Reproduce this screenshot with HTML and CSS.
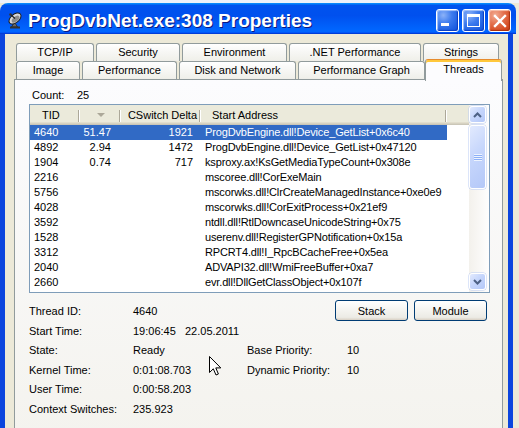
FILE: index.html
```html
<!DOCTYPE html>
<html>
<head>
<meta charset="utf-8">
<link rel="stylesheet" href="styles.css">
</head>
<body>
<div class="window">
  <div class="titlebar">
    <svg class="appicon" viewBox="0 0 18 18" width="18" height="18">
      <path d="M7.5 11 L10.5 16 L4.5 16 Z" fill="#6a6a6a" stroke="#222" stroke-width="0.8"/>
      <rect x="3" y="15.5" width="10" height="2" fill="#333"/>
      <ellipse cx="8" cy="7.5" rx="7" ry="4.2" transform="rotate(-40 8 7.5)" fill="#d9d9d9" stroke="#1d1d1d" stroke-width="1"/>
      <ellipse cx="8.6" cy="8.2" rx="4.6" ry="2.4" transform="rotate(-40 8.6 8.2)" fill="#8c8c8c"/>
      <line x1="8" y1="7.5" x2="3.5" y2="3.5" stroke="#1d1d1d" stroke-width="1.2"/>
      <circle cx="3.5" cy="3.5" r="1.3" fill="#333"/>
    </svg>
    <span class="title">ProgDvbNet.exe:308 Properties</span>
    <div class="tb-buttons">
      <div class="tbtn blue min"><span class="min-glyph"></span></div>
      <div class="tbtn blue max"><span class="max-glyph"></span></div>
      <div class="tbtn close">
        <svg viewBox="0 0 14 14" width="14" height="14"><path d="M2 2 L12 12 M12 2 L2 12" stroke="#fff" stroke-width="2.4" stroke-linecap="square"/></svg>
      </div>
    </div>
  </div>
  <div class="frame">
    <div class="tabs">
      <div class="tabrow">
        <div class="tab t-tcp">TCP/IP</div>
        <div class="tab t-sec">Security</div>
        <div class="tab t-env">Environment</div>
        <div class="tab t-net">.NET Performance</div>
        <div class="tab t-str">Strings</div>
      </div>
      <div class="tabrow">
        <div class="tab t-img">Image</div>
        <div class="tab t-perf">Performance</div>
        <div class="tab t-disk">Disk and Network</div>
        <div class="tab t-graph">Performance Graph</div>
        <div class="tab t-thr active">Threads</div>
      </div>
    </div>
    <div class="panel">
      <div class="count"><span class="count-label">Count:</span><span>25</span></div>
      <div class="list">
        <div class="list-main">
          <div class="lv-header">
            <div class="hc c1 hl">TID</div>
            <div class="hc c2 hcenter"><span class="sortarrow"></span></div>
            <div class="hc c3 hr">CSwitch Delta</div>
            <div class="hc c4 hl2">Start Address</div>
            <div class="hc c5"></div>
          </div>
          <div class="lv-row sel"><span class="c1">4640</span><span class="c2">51.47</span><span class="c3">1921</span><span class="c4">ProgDvbEngine.dll!Device_GetList+0x6c40</span></div>
          <div class="lv-row"><span class="c1">4892</span><span class="c2">2.94</span><span class="c3">1472</span><span class="c4">ProgDvbEngine.dll!Device_GetList+0x47120</span></div>
          <div class="lv-row"><span class="c1">1904</span><span class="c2">0.74</span><span class="c3">717</span><span class="c4">ksproxy.ax!KsGetMediaTypeCount+0x308e</span></div>
          <div class="lv-row"><span class="c1">2216</span><span class="c2"></span><span class="c3"></span><span class="c4">mscoree.dll!CorExeMain</span></div>
          <div class="lv-row"><span class="c1">5756</span><span class="c2"></span><span class="c3"></span><span class="c4">mscorwks.dll!ClrCreateManagedInstance+0xe0e9</span></div>
          <div class="lv-row"><span class="c1">4028</span><span class="c2"></span><span class="c3"></span><span class="c4">mscorwks.dll!CorExitProcess+0x21ef9</span></div>
          <div class="lv-row"><span class="c1">3592</span><span class="c2"></span><span class="c3"></span><span class="c4">ntdll.dll!RtlDowncaseUnicodeString+0x75</span></div>
          <div class="lv-row"><span class="c1">1528</span><span class="c2"></span><span class="c3"></span><span class="c4">userenv.dll!RegisterGPNotification+0x15a</span></div>
          <div class="lv-row"><span class="c1">3312</span><span class="c2"></span><span class="c3"></span><span class="c4">RPCRT4.dll!I_RpcBCacheFree+0x5ea</span></div>
          <div class="lv-row"><span class="c1">2040</span><span class="c2"></span><span class="c3"></span><span class="c4">ADVAPI32.dll!WmiFreeBuffer+0xa7</span></div>
          <div class="lv-row"><span class="c1">2660</span><span class="c2"></span><span class="c3"></span><span class="c4">evr.dll!DllGetClassObject+0x107f</span></div>
        </div>
        <div class="vscroll">
          <div class="sbtn up"><svg viewBox="0 0 9 6" width="9" height="6"><path d="M1 5 L4.5 1.5 L8 5" fill="none" stroke="#4d6185" stroke-width="2"/></svg></div>
          <div class="thumb"><span class="grip"></span></div>
          <div class="track"></div>
          <div class="sbtn down"><svg viewBox="0 0 9 6" width="9" height="6"><path d="M1 1 L4.5 4.5 L8 1" fill="none" stroke="#4d6185" stroke-width="2"/></svg></div>
        </div>
      </div>
      <div class="details">
        <span class="lbl">Thread ID:</span><span class="val">4640</span>
        <div class="btns"><button class="xpbtn">Stack</button><button class="xpbtn">Module</button></div>
        <span class="lbl">Start Time:</span><span class="val wide">19:06:45&nbsp;&nbsp;&nbsp;22.05.2011</span><span></span><span></span>
        <span class="lbl">State:</span><span class="val">Ready</span><span class="lbl">Base Priority:</span><span class="val">10</span>
        <span class="lbl">Kernel Time:</span><span class="val">0:01:08.703</span><span class="lbl">Dynamic Priority:</span><span class="val">10</span>
        <span class="lbl">User Time:</span><span class="val">0:00:58.203</span><span></span><span></span>
        <span class="lbl">Context Switches:</span><span class="val">235.923</span><span></span><span></span>
      </div>
    </div>
  </div>
</div>
<svg class="cursor" viewBox="0 0 13 21" width="13" height="21">
  <path d="M0.5 0.5 L0.5 16.5 L4.3 12.8 L7 19 L9.4 18 L6.8 11.9 L11.8 11.9 Z" fill="#fff" stroke="#000" stroke-width="1" stroke-linejoin="miter"/>
</svg>
</body>
</html>
```

FILE: styles.css
```css
* { box-sizing: border-box; }
html, body { margin: 0; padding: 0; }
body {
  width: 519px;
  height: 428px;
  overflow: hidden;
  position: relative;
  background: linear-gradient(to bottom, #eef2fa 0, #eef2fa 3px, #ece9d8 3px);
  font-family: "Liberation Sans", Arial, sans-serif;
  font-size: 11px;
  color: #000;
}
.window {
  margin-top: 3px;
  width: 516px;
}
.titlebar {
  height: 31px;
  width: 516px;
  display: flex;
  align-items: center;
  padding: 0 5px 0 7px;
  border-radius: 8px 8px 0 0;
  background: linear-gradient(180deg, #0997ff 0%, #0053ee 8%, #0050ee 40%, #0066ff 88%, #0066ff 93%, #005bff 95%, #003dd7 96%, #003dd7 100%);
}
.appicon { margin-top: 3px; flex: none; }
.title {
  margin-left: 3px;
  margin-top: 4px;
  color: #fff;
  font-weight: bold;
  font-size: 19px;
  white-space: nowrap;
  text-shadow: 1px 1px #0a1883;
}
.tb-buttons {
  margin-left: auto;
  margin-top: 4px;
  display: flex;
  gap: 3px;
}
.tbtn {
  width: 23px;
  height: 23px;
  border: 1px solid #fff;
  border-radius: 3px;
  display: flex;
  align-items: center;
  justify-content: center;
}
.tbtn.blue {
  background: radial-gradient(circle at 30% 25%, #8cb2f8 0%, #3d7bee 40%, #1f60e2 75%, #1553d9 100%);
  box-shadow: inset -1px -1px 1px #0b3fc4, inset 1px 1px 1px #a9c6fb;
}
.tbtn.close {
  background: radial-gradient(circle at 30% 25%, #f3ad94 0%, #e3714e 40%, #d64c22 75%, #c5401a 100%);
  box-shadow: inset -1px -1px 1px #a8300e, inset 1px 1px 1px #f7c2b0;
}
.tbtn.min { align-items: flex-end; justify-content: flex-start; padding: 0 0 5px 4px; }
.min-glyph { width: 8px; height: 3px; background: #fff; }
.max-glyph {
  width: 13px;
  height: 13px;
  border: 1px solid #fff;
  border-top-width: 3px;
}
.frame {
  width: 513px;
  height: 394px;
  border-left: 5px solid #0b45de;
  border-right: 5px solid #0b45de;
  background: #ece9d8;
  padding: 9px 5px 0 9px;
}
.tabs { margin-left: 2px; }
.tabrow {
  display: flex;
  gap: 2px;
  height: 18px;
}
.tab {
  height: 18px;
  border: 1px solid #919b9c;
  border-bottom: none;
  border-radius: 3px 3px 0 0;
  background: linear-gradient(180deg, #ffffff, #fafaf9 26%, #f0f0ea 95%, #ecebe6);
  text-align: center;
  line-height: 16px;
  white-space: nowrap;
}
.t-tcp { width: 78px; }
.t-sec { width: 84px; }
.t-env { width: 105px; }
.t-net { width: 132px; }
.t-str { width: 76px; }
.t-img { width: 64px; }
.t-perf { width: 95px; }
.t-disk { width: 117px; }
.t-graph { width: 127px; }
.tab.active {
  width: 77px;
  height: 22px;
  margin-top: -2px;
  margin-left: -2px;
  position: relative;
  z-index: 2;
  background: #fcfcfe;
  border-top: 1px solid #e68b2c;
  box-shadow: inset 0 2px #ffc83c;
  line-height: 17px;
  padding-top: 1px;
}
.panel {
  width: 489px;
  height: 361px;
  border: 1px solid #919b9c;
  background: linear-gradient(180deg, #fcfcfe, #f4f3ee);
}
.count {
  margin: 8px 0 0 17px;
  height: 14px;
  line-height: 14px;
  display: flex;
}
.count-label { width: 45px; }
.list {
  margin: 2px 0 0 14px;
  width: 461px;
  height: 189px;
  border: 1px solid #7f9db9;
  background: #fff;
  display: flex;
}
.list-main { width: 439px; flex: none; }
.lv-header {
  height: 20px;
  display: flex;
  background: #ebeadb;
  box-shadow: inset 0 -1px #cbc7b8, inset 0 -2px #d6d2c2, inset 0 -3px #e2decd;
  line-height: 20px;
}
.hc {
  white-space: nowrap;
  background:
    linear-gradient(#aca899, #aca899) no-repeat calc(100% - 1px) 5px / 1px 12px,
    linear-gradient(#ffffff, #ffffff) no-repeat 100% 5px / 1px 12px;
}
.hc.c5 { background: none; flex: 1; }
.hl { padding-left: 12px; }
.hl2 { padding-left: 11px; }
.hr { text-align: right; padding-right: 4px; }
.hcenter { display: flex; align-items: center; justify-content: center; }
.sortarrow {
  width: 0;
  height: 0;
  border-left: 4px solid transparent;
  border-right: 4px solid transparent;
  border-top: 4px solid #aca899;
  margin-top: -1px;
}
.c1 { width: 50px; flex: none; }
.c2 { width: 41px; flex: none; }
.c3 { width: 80px; flex: none; }
.c4 { width: 246px; flex: none; }
.lv-row {
  width: 417px;
  height: 15px;
  line-height: 15px;
  display: flex;
  white-space: nowrap;
}
.lv-row span { overflow: hidden; }
.lv-row .c1 { padding-left: 4px; }
.lv-row .c2 { text-align: right; padding-right: 10px; }
.lv-row .c3 { text-align: right; padding-right: 8px; }
.lv-row .c4 { padding-left: 4px; letter-spacing: -0.15px; }
.lv-row.sel { background: #316ac5; color: #fff; }
.vscroll {
  width: 20px;
  flex: none;
  display: flex;
  flex-direction: column;
  background: linear-gradient(90deg, #f3f1ec, #fefefe);
  padding: 1px 3px 2px 0;
}
.sbtn, .thumb {
  width: 17px;
  border: 1px solid #fff;
  border-radius: 3px;
  background: linear-gradient(135deg, #e2eafe 0%, #c6d6fc 45%, #b4c8f8 100%);
  box-shadow: 0 0 0 0.5px #b9cbf3;
  display: flex;
  align-items: center;
  justify-content: center;
}
.sbtn { height: 17px; }
.thumb { height: 64px; margin-top: 2px; }
.track { flex: 1; }
.grip {
  width: 8px;
  height: 7px;
  background: repeating-linear-gradient(180deg, #eef4fe 0, #eef4fe 1px, #8cb0f8 1px, #8cb0f8 2px);
}
.details {
  margin: 7px 0 0 14px;
  width: 458px;
  display: grid;
  grid-template-columns: 104px 114px 100px 1fr;
  grid-template-rows: 21px;
  grid-auto-rows: 19.5px;
  align-items: center;
  white-space: nowrap;
}
.btns {
  grid-column: 3 / 5;
  justify-self: end;
  display: flex;
  gap: 6px;
}
.xpbtn {
  width: 73px;
  height: 21px;
  padding: 0;
  font-family: "Liberation Sans", Arial, sans-serif;
  font-size: 11px;
  color: #000;
  border: 1px solid #003c74;
  border-radius: 3px;
  background: linear-gradient(180deg, #ffffff, #ecebe5 86%, #d8d0c4);
}
.cursor {
  position: absolute;
  left: 209px;
  top: 356px;
}
```
